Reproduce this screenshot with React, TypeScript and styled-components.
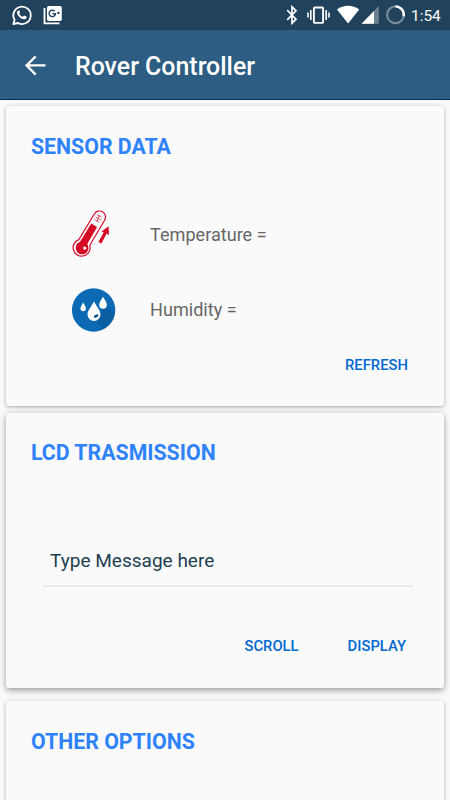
import React from "react";
import styled, { createGlobalStyle } from "styled-components";

const GlobalStyle = createGlobalStyle`
  * { box-sizing: border-box; }
  html, body { margin: 0; height: 100%; overflow: hidden; }
  body { font-family: Roboto, "Liberation Sans", sans-serif; background: #fafafa; }
`;

const Screen = styled.div`
  width: 450px;
  height: 800px;
  overflow: hidden;
  display: flex;
  flex-direction: column;
  background: #fafafa;
`;

const StatusBar = styled.header`
  height: 30px;
  flex: none;
  display: flex;
  background: #21425c;
  color: #fff;
`;

const StatusIcons = styled.svg`
  display: block;
  flex: none;
`;

const Clock = styled.span`
  width: 39px;
  margin-left: 2px;
  font-size: 15.4px;
  line-height: 32px;
  font-weight: 400;
  white-space: nowrap;
`;

const Toolbar = styled.div`
  height: 70px;
  flex: none;
  display: flex;
  align-items: center;
  padding: 2px 0 0 25px;
  gap: 29px;
  background: #2d5d82;
  border-bottom: 1px solid #062e5d;
`;

const BackButton = styled.button`
  width: 21px;
  height: 22px;
  padding: 0;
  border: 0;
  background: none;
  svg { display: block; }
`;

const AppTitle = styled.h1`
  margin: 0;
  padding-top: 2px;
  color: #fff;
  font-size: 24.9px;
  line-height: 30px;
  font-weight: 500;
  white-space: nowrap;
`;

const Cards = styled.main`
  flex: 1;
  min-height: 0;
  display: flex;
  flex-direction: column;
  padding: 6px 6px 0;
`;

const Card = styled.section<{ $height: number; $gap: number; $raised?: boolean }>`
  height: ${(p) => p.$height}px;
  flex: none;
  margin-bottom: ${(p) => p.$gap}px;
  display: flex;
  flex-direction: column;
  border-radius: 3px;
  background: #fafafa;
  box-shadow: ${(p) =>
    p.$raised
      ? "0 3px 6px rgba(0,0,0,.3), 0 0 5px rgba(0,0,0,.12)"
      : "0 1px 3px rgba(0,0,0,.22), 0 1px 6px rgba(0,0,0,.14)"};
`;

const CardTitle = styled.h2<{ $top?: number }>`
  margin: ${(p) => p.$top ?? 26}px 0 0 25px;
  height: 30px;
  color: #2e82fc;
  font-size: 21.3px;
  line-height: 30px;
  font-weight: 700;
  white-space: nowrap;
`;

const Readings = styled.div`
  margin-top: 35px;
  display: flex;
  flex-direction: column;
`;

const Reading = styled.div`
  height: 75px;
  display: grid;
  grid-template-columns: 50px 1fr;
  column-gap: 31px;
  align-items: center;
  padding-left: 63px;
  color: #666;
  font-size: 18.1px;
  line-height: 24px;
  svg { display: block; }
`;

const Actions = styled.div<{ $top: number; $right: number }>`
  display: flex;
  justify-content: flex-end;
  gap: 49px;
  margin-top: ${(p) => p.$top}px;
  padding-right: ${(p) => p.$right}px;
`;

const TextButton = styled.button`
  padding: 0;
  border: 0;
  background: none;
  color: #0068d2;
  font: 500 14.8px/20px Roboto, sans-serif;
  white-space: nowrap;
`;

const MessageField = styled.div`
  width: 370px;
  margin: 72px 0 0 37px;
  padding: 9px 0 0 7px;
  height: 45px;
  color: #213f50;
  font-size: 19.05px;
  line-height: 24px;
  white-space: nowrap;
`;

const FieldLine = styled.div`
  width: 370px;
  height: 6px;
  margin-left: 37px;
  border: 1px solid #f2f2f2;
  border-top: 2px solid #ebebeb;
  border-bottom: 0;
  border-radius: 2px 2px 0 0;
`;

const NotificationIcons = () => (
  <StatusIcons width="80" height="30" viewBox="0 0 80 30" fill="none">
    <path d="M13.4 24.1l1.2-4.3a8.7 8.7 0 1 1 3.4 3.2z" stroke="#fff" strokeWidth="1.8" strokeLinejoin="round" />
    <path d="M18.4 10.4c-.6 0-1.5 1-1.4 2.4.2 3 4.3 6.8 7.4 6.5 1.4-.1 2.4-1 2.4-2.3 0-.5-1.5-1.1-2.7-1.6l-1.3 1.4c-1.7-.7-2.9-1.9-3.6-3.3l1-1.2-.9-1.9z" fill="#fff" />
    <path d="M44.5 8v15.3h15" stroke="#fff" strokeWidth="1.8" />
    <rect x="47" y="6" width="14.8" height="15" rx="1.7" fill="#fff" />
    <path d="M54.6 11.2a3.2 3.2 0 1 0 .9 2.5h-2.9M57.2 12.9h2.4M58.4 11.7v2.4" stroke="#21425c" strokeWidth="1.4" />
  </StatusIcons>
);

const SystemIcons = () => (
  <StatusIcons width="329" height="30" viewBox="80 0 329 30" fill="none">
    <path d="M287.2 10.2l8.8 9-4 4V6.8l4 4-8.8 9" stroke="#fff" strokeWidth="1.7" />
    <rect x="313.9" y="7.5" width="9.2" height="15.4" rx="1" stroke="#fff" strokeWidth="1.9" />
    <path d="M310.8 10v10M308 12.5v5M326.2 10v10M329 12.5v5" stroke="#fff" strokeWidth="1.6" />
    <path d="M337 9.5c6.4-5 15.7-5 22.2 0L348.1 23.4z" fill="#fff" />
    <path d="M361.5 23.7l17.3-17.6v17.6z" fill="#6c8290" />
    <path d="M361.5 23.7L374 11v12.7z" fill="#fff" />
    <circle cx="395.5" cy="14.8" r="8.4" stroke="#74899a" strokeWidth="2.2" />
    <path d="M395.5 6.4a8.4 8.4 0 0 1 8.2 10" stroke="#fff" strokeWidth="2.3" />
  </StatusIcons>
);

const Thermometer = () => (
  <svg width="50" height="50" viewBox="69 209 50 50" fill="none">
    <path d="M78.8 238.6L94.3 213a5.9 5.9 0 0 1 10.4 6L89.8 244.3A8.5 8.5 0 1 1 78.8 238.6z" stroke="#d90b2b" strokeWidth="1.2" />
    <circle cx="82.1" cy="246.9" r="6.4" fill="#d60925" />
    <path d="M79.4 241.7L91.3 222.5l5.8 3.4-10.7 18.6z" fill="#d60925" />
    <circle cx="84.8" cy="247.1" r="1.7" fill="#fafafa" />
    <path d="M97 213.6l4.6 2.7M95.7 216l5.4 3.1M94.5 218.4l4.8 2.8M99.6 213.8l-2.8 6.8" stroke="#df4a58" strokeWidth=".9" />
    <path d="M98.4 241l5.3-9.4-2.1-1.2 7-5.2.4 8.7-2.3-1.3-5.3 9.8z" fill="#d60925" />
  </svg>
);

const Droplets = () => (
  <svg width="50" height="50" viewBox="69 285 50 50">
    <circle cx="93.6" cy="310" r="21.7" fill="#0c69b4" />
    <path d="M86 310l17 19a22 22 0 0 0 12-15l-8-9-7 10z" fill="#07548f" opacity=".5" />
    <path d="M83.2 302.5c1.7 3 2.7 4.5 2.7 6.1a2.7 2.7 0 0 1-5.4 0c0-1.6 1.1-3.2 2.7-6.1zM103 296.8c2.2 3.8 3.8 5.8 3.8 8.1a3.8 3.8 0 0 1-7.6 0c0-2.3 1.6-4.3 3.8-8.1zM94 301.4c3.6 6.2 6.5 9.5 6.5 13a6.5 6.5 0 0 1-13 0c0-3.5 3-6.8 6.5-13z" fill="#fff" />
    <ellipse cx="96.2" cy="316" rx="2.6" ry="1.4" fill="#0c5792" transform="rotate(-28 96.2 316)" />
  </svg>
);

export default function App() {
  return (
    <>
      <GlobalStyle />
      <Screen>
        <StatusBar>
          <NotificationIcons />
          <SystemIcons />
          <Clock>1:54</Clock>
        </StatusBar>
        <Toolbar>
          <BackButton aria-label="Back">
            <svg width="21" height="22" viewBox="0 0 21 22" fill="none">
              <path d="M10.7 1.4L1.6 10.4l9.1 9.2M1.6 10.4h18.9" stroke="#fff" strokeWidth="2.3" />
            </svg>
          </BackButton>
          <AppTitle>Rover Controller</AppTitle>
        </Toolbar>
        <Cards>
          <Card $height={300} $gap={7}>
            <CardTitle>SENSOR DATA</CardTitle>
            <Readings>
              <Reading><Thermometer /><span>Temperature =</span></Reading>
              <Reading><Droplets /><span>Humidity =</span></Reading>
            </Readings>
            <Actions $top={8} $right={36}><TextButton>REFRESH</TextButton></Actions>
          </Card>
          <Card $height={275} $gap={13} $raised>
            <CardTitle $top={25}>LCD TRASMISSION</CardTitle>
            <MessageField>Type Message here</MessageField>
            <FieldLine />
            <Actions $top={45} $right={38}>
              <TextButton>SCROLL</TextButton>
              <TextButton>DISPLAY</TextButton>
            </Actions>
          </Card>
          <Card $height={130} $gap={0}>
            <CardTitle>OTHER OPTIONS</CardTitle>
          </Card>
        </Cards>
      </Screen>
    </>
  );
}
